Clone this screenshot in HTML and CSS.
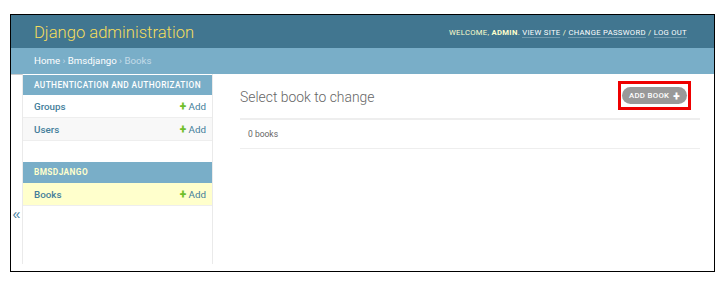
FILE: index.html
```html
<!DOCTYPE html>
<html lang="en">
<head>
  <meta charset="UTF-8">
  <title>Select book to change | Django site admin</title>
  <link rel="stylesheet" href="styles.css">
</head>
<body>
  <div class="frame">
    <header class="site-header">
      <div class="branding">Django administration</div>
      <div class="user-tools">
        Welcome, <strong>admin</strong>.
        <a href="#">View site</a> /
        <a href="#">Change password</a> /
        <a href="#">Log out</a>
      </div>
    </header>

    <div class="breadcrumbs">
      <a href="#">Home</a> › <a href="#">Bmsdjango</a> › <span class="current">Books</span>
    </div>

    <div class="main">
      <button class="toggle-nav">«</button>

      <nav class="sidebar">
        <div class="module">
          <div class="caption">Authentication and Authorization</div>
          <div class="row">
            <a href="#" class="model">Groups</a>
            <a href="#" class="addlink"><span class="plus">+</span> Add</a>
          </div>
          <div class="row alt">
            <a href="#" class="model">Users</a>
            <a href="#" class="addlink"><span class="plus">+</span> Add</a>
          </div>
        </div>

        <div class="module">
          <div class="caption current-app">Bmsdjango</div>
          <div class="row current-model">
            <a href="#" class="model">Books</a>
            <a href="#" class="addlink"><span class="plus">+</span> Add</a>
          </div>
        </div>
      </nav>

      <section class="content">
        <div class="content-head">
          <h1>Select book to change</h1>
          <div class="highlight">
            <a href="#" class="add-button">Add book <span class="btn-plus">+</span></a>
          </div>
        </div>
        <div class="changelist">
          <p class="paginator">0 books</p>
        </div>
      </section>
    </div>
  </div>
</body>
</html>
```

FILE: styles.css
```css
body {
  margin: 0;
  background: #fff;
  font-family: Roboto, "Liberation Sans", sans-serif;
  color: #333;
}
a {
  text-decoration: none;
}
.frame {
  margin: 14px 0 0 10px;
  width: 703px;
  height: 256px;
  border: 1px solid #000;
  overflow: hidden;
}

/* header */
.site-header {
  height: 33px;
  background: #417690;
  display: flex;
  align-items: center;
  justify-content: space-between;
  padding: 0 27px 0 23px;
}
.branding {
  color: #f5dd5d;
  font-size: 16.6px;
  font-weight: 300;
  margin-top: 1px;
}
.user-tools {
  color: #ffc;
  font-size: 7.7px;
  text-transform: uppercase;
  letter-spacing: 0.3px;
  margin-top: 1px;
}
.user-tools strong {
  font-weight: 700;
}
.user-tools a {
  color: #fff;
  border-bottom: 1px solid rgba(255, 255, 255, 0.25);
}

/* breadcrumbs */
.breadcrumbs {
  height: 26px;
  line-height: 26px;
  background: #79aec8;
  padding-left: 23px;
  color: #c4dce8;
  font-size: 9.7px;
}
.breadcrumbs a {
  color: #fff;
}

/* main area */
.main {
  display: flex;
  height: 197px;
}
.toggle-nav {
  width: 12px;
  flex: 0 0 12px;
  border: 0;
  border-right: 1px solid #eaeaea;
  border-top: 1px solid #ccc;
  background: #fff;
  color: #447e9b;
  font-size: 14px;
  padding: 131px 0 0;
  display: flex;
  justify-content: center;
  align-items: flex-start;
  height: 190px;
  box-sizing: border-box;
}
.sidebar {
  width: 189px;
  flex: 0 0 189px;
  border-right: 1px solid #eaeaea;
  padding-top: 1px;
  height: 189px;
}
.module {
  margin-bottom: 21px;
}
.caption {
  height: 20px;
  line-height: 20px;
  background: #79aec8;
  color: #fff;
  font-size: 8.3px;
  font-weight: 500;
  text-transform: uppercase;
  letter-spacing: 0.4px;
  padding-left: 11px;
}
.caption.current-app {
  height: 21px;
  line-height: 21px;
  color: #ffc;
  font-weight: 700;
}
.row {
  height: 22px;
  border-bottom: 1px solid #eee;
  display: flex;
  align-items: center;
  justify-content: space-between;
  padding: 0 6px 0 11px;
  font-size: 9.8px;
}
.row.alt {
  background: #f8f8f8;
}
.row.current-model {
  background: #ffc;
}
.model {
  color: #447e9b;
  font-weight: 500;
}
.addlink {
  color: #447e9b;
}
.plus {
  color: #70bf2b;
  font-weight: 900;
  font-size: 12px;
}

/* content */
.content {
  flex: 1;
  padding: 0 14px 0 27px;
}
.content-head {
  display: flex;
  align-items: center;
  justify-content: space-between;
  height: 44px;
}
.content-head h1 {
  margin: 0;
  font-size: 13.9px;
  font-weight: 300;
  color: #666;
  padding-top: 2px;
}
.highlight {
  border: 3px solid #e00;
  padding: 3px 1px;
  margin-right: 9px;
  margin-top: -1px;
}
.add-button {
  display: flex;
  align-items: center;
  height: 17px;
  padding: 0 7px;
  border-radius: 9px;
  background: #999;
  color: #fff;
  font-size: 7.8px;
  font-weight: 500;
  letter-spacing: 0.3px;
  text-transform: uppercase;
}
.btn-plus {
  font-size: 12px;
  font-weight: 900;
  margin-left: 4px;
}
.changelist {
  border-top: 2px solid #eee;
  border-bottom: 1px solid #eee;
}
.paginator {
  margin: 0;
  height: 28px;
  line-height: 28px;
  padding-left: 8px;
  font-size: 8.5px;
  color: #666;
}
```
